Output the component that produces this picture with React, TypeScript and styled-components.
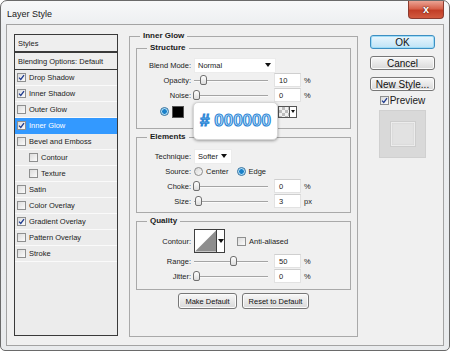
import styled, { createGlobalStyle } from 'styled-components';

const GlobalStyle = createGlobalStyle`
  html, body { margin: 0; padding: 0; background: #ffffff; }
  body { font-family: "Liberation Sans", Arial, sans-serif; color: #1b1b1b; }
  * { box-sizing: border-box; }
`;

const Window = styled.div`
  width: 450px;
  height: 351px;
  border: 1px solid #6a6a6a;
  border-radius: 7px 7px 5px 5px;
  background: linear-gradient(#f7f8f9, #eceef0 26px, #e9ebed);
  padding: 0 5px 4px;
  display: flex;
  flex-direction: column;
  overflow: hidden;
`;

const TitleBar = styled.div`
  height: 23px;
  display: flex;
  justify-content: space-between;
  align-items: flex-start;
`;

const Title = styled.span`
  font-size: 9px;
  line-height: 10px;
  padding: 8px 0 0 1px;
  color: #202020;
`;

const CloseButton = styled.div`
  width: 36px;
  height: 18px;
  border: 1px solid #8b3b2f;
  border-top: none;
  border-radius: 0 0 4px 4px;
  background: linear-gradient(#eba394, #d7624c 45%, #c23e27 55%, #d15a3f);
  color: #fff;
  font-size: 11px;
  font-weight: bold;
  line-height: 16px;
  text-align: center;
  text-shadow: 0 0 2px #5a1a10, 0 0 1px #5a1a10;
`;

const Client = styled.div`
  flex: 1;
  border: 1px solid #a3a3a3;
  background: #f0f0f0;
  display: flex;
  align-items: flex-start;
  padding: 0 8px 0 7px;
`;

/* ---------- left styles list ---------- */

const StylesPanel = styled.div`
  margin-top: 9px;
  width: 104px;
  height: 302px;
  border: 1px solid #3a3a3a;
  background: #ececec;
  font-size: 7.5px;
`;

const PanelHeader = styled.div<{ $thick?: boolean }>`
  height: ${(p) => (p.$thick ? 18 : 17)}px;
  border-bottom: ${(p) => (p.$thick ? 2 : 1)}px solid #3a3a3a;
  padding-left: 3px;
  display: flex;
  align-items: center;
  background: #eeeeee;
`;

const StyleRow = styled.div<{ $indent?: boolean; $active?: boolean }>`
  height: 16px;
  border-bottom: 1px solid ${(p) => (p.$active ? '#3399ff' : '#fafafa')};
  padding-left: ${(p) => (p.$indent ? 14 : 2)}px;
  display: flex;
  align-items: center;
  gap: 3px;
  background: ${(p) => (p.$active ? '#3399ff' : 'transparent')};
  color: ${(p) => (p.$active ? '#ffffff' : '#1b1b1b')};
`;

const Box = styled.span`
  width: 9px;
  height: 9px;
  flex: none;
  border: 1px solid #8e8f8f;
  background: linear-gradient(135deg, #dcdcdc, #fbfbfb);
  display: inline-flex;
  align-items: center;
  justify-content: center;
`;

const Check = ({ on }: { on?: boolean }) => (
  <Box>
    {on && (
      <svg width="7" height="7" viewBox="0 0 7 7">
        <path d="M1 3.6 L2.8 5.5 L6 1.2" fill="none" stroke="#1f3b8f" strokeWidth="1.3" />
      </svg>
    )}
  </Box>
);

/* ---------- main group ---------- */

const Group = styled.fieldset`
  margin: 6px 0 0 11px;
  width: 229px;
  height: 306px;
  border: 1px solid #a9a9a9;
  padding: 2px 6px 0;
  min-inline-size: 0;
`;

const SubGroup = styled.fieldset<{ $pt: number; $pb: number; $mt?: number }>`
  margin: ${(p) => p.$mt ?? 0}px 0 0;
  border: 1px solid #a9a9a9;
  padding: ${(p) => p.$pt}px 6px ${(p) => p.$pb}px;
  min-inline-size: 0;
`;

const Legend = styled.legend`
  font-size: 8px;
  font-weight: bold;
  line-height: 10px;
  margin-left: 4px;
  padding: 0 3px;
  color: #1b1b1b;
`;

const Form = styled.div<{ $rows?: string }>`
  display: grid;
  grid-template-columns: 48px 1fr;
  grid-template-rows: ${(p) => p.$rows ?? 'none'};
  grid-auto-rows: 14px;
  column-gap: 3px;
  row-gap: 1px;
  align-items: center;
  font-size: 7.5px;
`;

const Label = styled.span`
  text-align: right;
  white-space: nowrap;
`;

const Control = styled.div`
  display: flex;
  align-items: center;
  height: 100%;
  position: relative;
`;

const Select = styled.div<{ $w: number }>`
  width: ${(p) => p.$w}px;
  height: 15px;
  background: #ffffff;
  border: 1px solid #ececec;
  padding: 0 4px 0 3px;
  display: flex;
  align-items: center;
  justify-content: space-between;
`;

const Caret = styled.span`
  width: 0;
  height: 0;
  border-left: 3px solid transparent;
  border-right: 3px solid transparent;
  border-top: 4px solid #111;
`;

const Track = styled.div`
  width: 74px;
  height: 14px;
  position: relative;
  &::before {
    content: '';
    position: absolute;
    left: 0;
    right: 0;
    top: 7px;
    height: 1px;
    background: #a4a4a4;
    box-shadow: 0 1px 0 #fafafa;
  }
`;

const Thumb = styled.span`
  position: absolute;
  top: 2px;
  width: 7px;
  height: 10px;
  border: 1px solid #6f6f6f;
  border-radius: 3px 3px 2px 2px;
  background: linear-gradient(#ffffff, #dcdcdc);
`;

const NumberBox = styled.div`
  width: 27px;
  height: 14px;
  margin-left: 6px;
  background: #ffffff;
  border: 1px solid #e2e2e2;
  border-top-color: #cfcfcf;
  padding-left: 4px;
  display: flex;
  align-items: center;
`;

const Unit = styled.span`
  margin-left: 3px;
`;

const Slider = ({ value, unit }: { value: number; unit: string }) => (
  <Control>
    <Track>
      <Thumb style={{ left: `calc(${value}% - 1px)` }} />
    </Track>
    <NumberBox>{value}</NumberBox>
    <Unit>{unit}</Unit>
  </Control>
);

const RadioDot = styled.span<{ $on?: boolean }>`
  width: 9px;
  height: 9px;
  flex: none;
  border-radius: 50%;
  border: 1px solid ${(p) => (p.$on ? '#2e6f9e' : '#8d8d8d')};
  background: ${(p) =>
    p.$on
      ? 'radial-gradient(circle, #1a7fc8 0 2px, #8fd0f4 2.5px, #e8f3fa 4px)'
      : 'linear-gradient(135deg, #d9d9d9, #fafafa)'};
`;

const RadioText = styled.span<{ $gap?: number }>`
  margin: 0 ${(p) => p.$gap ?? 0}px 0 3px;
`;

const ColorRow = styled.div`
  grid-column: 1 / span 2;
  height: 14px;
  margin-top: 3px;
  padding-left: 17px;
  display: flex;
  align-items: center;
  position: relative;
`;

const ColorSwatch = styled.span`
  width: 12px;
  height: 12px;
  margin-left: 3px;
  background: #000;
  border: 1px solid #555;
`;

const GradientSwatch = styled.span`
  width: 12px;
  height: 12px;
  margin-left: 8px;
  border: 1px solid #555;
  background: conic-gradient(#bdbdbd 25%, #f2f2f2 0 50%, #bdbdbd 0 75%, #f2f2f2 0) 0 0 / 6px 6px;
`;

const ArrowBox = styled.span`
  width: 7px;
  height: 12px;
  border: 1px solid #555;
  border-left: none;
  background: #fff;
  display: flex;
  align-items: center;
  justify-content: center;
`;

const SmallCaret = styled(Caret)`
  border-left-width: 2px;
  border-right-width: 2px;
  border-top-width: 3px;
`;

const Tooltip = styled.div`
  position: absolute;
  left: 50px;
  top: -3px;
  width: 85px;
  height: 38px;
  background: #ffffff;
  border: 1px solid #d6d6d6;
  border-radius: 5px;
  box-shadow: 0 1px 3px rgba(0, 0, 0, 0.35);
  display: flex;
  align-items: center;
  justify-content: center;
  white-space: nowrap;
  font-family: "Liberation Sans", Arial, sans-serif;
  font-size: 17px;
  font-weight: bold;
  color: #cfe8fb;
  -webkit-text-stroke: 1.1px #2a86d6;
`;

const ContourBox = styled.div`
  width: 31px;
  height: 24px;
  border: 1px solid #3f3f3f;
  background: #ffffff;
  display: flex;
`;

const ContourArrow = styled.span`
  width: 8px;
  border-left: 1px solid #3f3f3f;
  display: flex;
  align-items: center;
  justify-content: center;
`;

const CheckLabel = styled.span`
  display: flex;
  align-items: center;
  gap: 3px;
  margin-left: 12px;
`;

const ButtonRow = styled.div`
  margin-top: 3px;
  display: flex;
  justify-content: center;
  gap: 5px;
`;

const Button = styled.div<{ $w: number; $h?: number; $size?: number; $primary?: boolean }>`
  width: ${(p) => p.$w}px;
  height: ${(p) => p.$h ?? 16}px;
  border: 1px solid ${(p) => (p.$primary ? '#3d8fc2' : '#777777')};
  border-radius: 3px;
  background: ${(p) =>
    p.$primary ? 'linear-gradient(#eaf6fd, #bfe3f6)' : 'linear-gradient(#f8f8f8, #e8e8e8 50%, #d9d9d9)'};
  box-shadow: ${(p) => (p.$primary ? 'inset 0 0 0 1px #9fdcf7' : 'inset 0 0 0 1px #fbfbfb')};
  font-size: ${(p) => p.$size ?? 7.5}px;
  display: flex;
  align-items: center;
  justify-content: center;
  color: #111;
`;

/* ---------- right column ---------- */

const SideColumn = styled.div`
  margin: 10px 0 0 12px;
  width: 65px;
  display: flex;
  flex-direction: column;
  align-items: center;
  gap: 7px;
`;

const PreviewRow = styled.div`
  display: flex;
  align-items: center;
  gap: 1px;
  font-size: 10px;
  height: 11px;
  margin-top: -3px;
`;

const PreviewSwatch = styled.div`
  width: 47px;
  height: 48px;
  margin-top: -3px;
  background: #d9d9d9;
  border: 1px solid #d0d0d0;
  display: flex;
  align-items: center;
  justify-content: center;
`;

const PreviewInner = styled.div`
  width: 24px;
  height: 24px;
  background: #e2e2e2;
  border: 1px solid #ececec;
  box-shadow: 0 0 0 1px #cdcdcd, inset 0 0 2px #cfcfcf;
`;

const styleItems: { name: string; on?: boolean; indent?: boolean; active?: boolean }[] = [
  { name: 'Drop Shadow', on: true },
  { name: 'Inner Shadow', on: true },
  { name: 'Outer Glow' },
  { name: 'Inner Glow', on: true, active: true },
  { name: 'Bevel and Emboss' },
  { name: 'Contour', indent: true },
  { name: 'Texture', indent: true },
  { name: 'Satin' },
  { name: 'Color Overlay' },
  { name: 'Gradient Overlay', on: true },
  { name: 'Pattern Overlay' },
  { name: 'Stroke' },
];

export default function App() {
  return (
    <>
      <GlobalStyle />
      <Window>
        <TitleBar>
          <Title>Layer Style</Title>
          <CloseButton>x</CloseButton>
        </TitleBar>
        <Client>
          <StylesPanel>
            <PanelHeader $thick>Styles</PanelHeader>
            <PanelHeader>Blending Options: Default</PanelHeader>
            {styleItems.map((s) => (
              <StyleRow key={s.name} $indent={s.indent} $active={s.active}>
                <Check on={s.on} />
                {s.name}
              </StyleRow>
            ))}
          </StylesPanel>

          <Group>
            <Legend>Inner Glow</Legend>

            <SubGroup $pt={5} $pb={11}>
              <Legend>Structure</Legend>
              <Form>
                <Label>Blend Mode:</Label>
                <Control>
                  <Select $w={82}>
                    Normal
                    <Caret />
                  </Select>
                </Control>
                <Label>Opacity:</Label>
                <Slider value={10} unit="%" />
                <Label>Noise:</Label>
                <Slider value={0} unit="%" />
                <ColorRow>
                  <RadioDot $on />
                  <ColorSwatch />
                  <RadioDot style={{ marginLeft: 77 }} />
                  <GradientSwatch />
                  <ArrowBox>
                    <SmallCaret />
                  </ArrowBox>
                  <Tooltip># 000000</Tooltip>
                </ColorRow>
              </Form>
            </SubGroup>

            <SubGroup $pt={7} $pb={4} $mt={3}>
              <Legend>Elements</Legend>
              <Form>
                <Label>Technique:</Label>
                <Control>
                  <Select $w={38}>
                    Softer
                    <Caret />
                  </Select>
                </Control>
                <Label>Source:</Label>
                <Control>
                  <RadioDot />
                  <RadioText $gap={8}>Center</RadioText>
                  <RadioDot $on />
                  <RadioText>Edge</RadioText>
                </Control>
                <Label>Choke:</Label>
                <Slider value={0} unit="%" />
                <Label>Size:</Label>
                <Slider value={3} unit="px" />
              </Form>
            </SubGroup>

            <SubGroup $pt={3} $pb={6} $mt={3}>
              <Legend>Quality</Legend>
              <Form $rows="24px 14px 14px">
                <Label>Contour:</Label>
                <Control>
                  <ContourBox>
                    <svg width="22" height="22" viewBox="0 0 22 22">
                      <polygon points="0,22 22,0 22,22" fill="#8e8e8e" />
                    </svg>
                    <ContourArrow>
                      <Caret />
                    </ContourArrow>
                  </ContourBox>
                  <CheckLabel>
                    <Check />
                    Anti-aliased
                  </CheckLabel>
                </Control>
                <Label>Range:</Label>
                <Slider value={50} unit="%" />
                <Label>Jitter:</Label>
                <Slider value={0} unit="%" />
              </Form>
            </SubGroup>

            <ButtonRow>
              <Button $w={59}>Make Default</Button>
              <Button $w={67}>Reset to Default</Button>
            </ButtonRow>
          </Group>

          <SideColumn>
            <Button $w={65} $h={14} $size={10} $primary>
              OK
            </Button>
            <Button $w={65} $h={14} $size={10}>
              Cancel
            </Button>
            <Button $w={65} $h={14} $size={10}>
              New Style...
            </Button>
            <PreviewRow>
              <Check on />
              Preview
            </PreviewRow>
            <PreviewSwatch>
              <PreviewInner />
            </PreviewSwatch>
          </SideColumn>
        </Client>
      </Window>
    </>
  );
}
